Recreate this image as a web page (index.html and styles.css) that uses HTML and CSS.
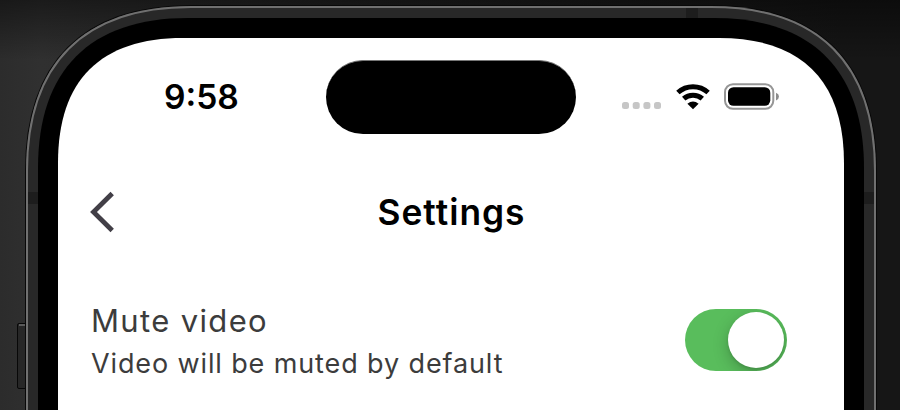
FILE: index.html
```html
<!DOCTYPE html>
<html lang="en">
<head>
<meta charset="utf-8">
<title>Settings</title>
<link rel="stylesheet" href="styles.css">
</head>
<body>
<svg class="device" viewBox="0 0 900 410" aria-hidden="true">
  <defs>
    <path id="body" d="M26 420V171C26 63 83 6 191 6H711C819 6 876 63 876 171V420Z"/>
    <clipPath id="shell"><use href="#body"/></clipPath>
  </defs>
  <path d="M30 323.500H19Q17.500 323.500 17.500 325V387Q17.500 388.500 19 388.500H30" fill="#272727" stroke="#080808"/>
  <path d="M19 325H26" stroke="#5a5a5a" stroke-width="2"/>
  <use href="#body" fill="none" stroke="#080808" stroke-width="2"/>
  <g clip-path="url(#shell)"><use href="#body" fill="#282828" stroke="#707070" stroke-width="4"/></g>
  <path d="M28 192H38V204H28ZM864 192H874V204H864ZM686 8H698V18H686Z" fill="#1d1d1d"/>
  <path d="M38 420V168C38 70 90 18 188 18H714C812 18 864 70 864 168V420Z" fill="#000"/>
  <path d="M58 420V163C58 80.300 100.300 38 183 38H719C801.700 38 844 80.300 844 163V420Z" fill="#fff"/>
</svg>
<main class="screen">
  <header class="status">
    <span class="time">9:58</span>
    <span class="island"></span>
    <span class="indicators">
      <svg class="signal" width="40" height="26" viewBox="0 0 40 26" fill="#c6c6c6"><rect x="0" y="18" width="7" height="7" rx="2.500"/><rect x="10.700" y="18" width="7" height="7" rx="2.500"/><rect x="21.400" y="18" width="7" height="7" rx="2.500"/><rect x="32" y="18" width="7" height="7" rx="2.500"/></svg>
      <svg class="wifi" width="34" height="26" viewBox="0 0 34 26"><path d="M1.900 8.500Q8.300 2.700 17 2.700T32.100 8.500M7.700 14.700Q11.600 11.200 17 11.200T26.300 14.700" fill="none" stroke="#000" stroke-width="5"/><path d="M11.400 19.700Q17 15.200 22.600 19.700L17 25.200Z"/></svg>
      <svg class="battery" width="56" height="28" viewBox="0 0 56 28"><rect x="1" y="1.200" width="48.300" height="24.600" rx="8" fill="none" stroke="#969696" stroke-width="2"/><rect x="4" y="4.200" width="42.300" height="18.600" rx="5.500"/><path d="M52 9.700Q55 11 55 13.500T52 17.500Z" fill="#8c8c8c"/></svg>
    </span>
  </header>
  <nav class="bar">
    <svg class="back" width="26" height="42" viewBox="0 0 26 42"><path d="M22.200 2.500L3.500 21L22.200 39.500" fill="none" stroke="#423f47" stroke-width="4.800"/></svg>
    <h1>Settings</h1>
  </nav>
  <section class="row">
    <div class="copy">
      <p class="label">Mute video</p>
      <p class="hint">Video will be muted by default</p>
    </div>
    <span class="toggle" role="switch" aria-checked="true"><span class="knob"></span></span>
  </section>
</main>
</body>
</html>
```
FILE: styles.css
```css
* { box-sizing: border-box; }
body {
  margin: 0;
  width: 900px;
  height: 410px;
  overflow: hidden;
  background:
    linear-gradient(180deg, rgba(0, 0, 0, .45), rgba(0, 0, 0, 0) 60px),
    linear-gradient(90deg, #2c2c2c 0, #303030 40px, #161616 840px, #161616);
  font-family: Inter, "Liberation Sans", sans-serif;
}
.device {
  position: absolute;
  top: 0;
  left: 0;
  width: 900px;
  height: 410px;
}
.screen {
  position: relative;
  margin: 0 58px;
  padding-top: 60px;
}
.status {
  display: grid;
  grid-template-columns: 268px 250px 1fr;
  align-items: center;
  height: 74px;
}
.time {
  padding-left: 106px;
  font-size: 33.6px;
  line-height: 40px;
  font-weight: 600;
  white-space: nowrap;
}
.island {
  height: 74px;
  border: 1px solid #777;
  border-width: 1px 0 0;
  border-radius: 37px;
  background: #000;
}
.indicators {
  display: flex;
  align-items: center;
  padding-left: 46px;
}
.wifi { margin-left: 13.5px; }
.battery { margin-left: 14.5px; }
.signal, .wifi, .battery { flex: none; }
.bar {
  display: grid;
  grid-template-columns: 100px 1fr 100px;
  align-items: center;
  height: 58px;
  margin-top: 49px;
}
.back { margin-left: 32px; }
h1 {
  margin: 0;
  padding: 2px 0 0 3px;
  text-align: center;
  font-size: 35.3px;
  line-height: 44px;
  font-weight: 600;
  letter-spacing: 1px;
}
.row {
  display: flex;
  justify-content: space-between;
  align-items: center;
  height: 84px;
  margin-top: 57px;
  padding: 0 57px 0 33px;
  color: #3c3c3c;
}
.copy {
  padding-top: 3px;
  white-space: nowrap;
}
p { margin: 0; }
.label {
  font-size: 31px;
  line-height: 43px;
  letter-spacing: 1.35px;
}
.hint {
  font-size: 27px;
  line-height: 43px;
  letter-spacing: .88px;
}
.toggle {
  display: flex;
  justify-content: flex-end;
  width: 102px;
  height: 62px;
  margin-right: -2px;
  padding: 3px;
  border-radius: 31px;
  background: #59bd5c;
  overflow: hidden;
}
.knob {
  width: 56px;
  height: 56px;
  border-radius: 50%;
  background: #fff;
  box-shadow: 0 5px 16px rgba(0, 0, 0, .22), 0 2px 3px rgba(0, 0, 0, .1);
}
```
